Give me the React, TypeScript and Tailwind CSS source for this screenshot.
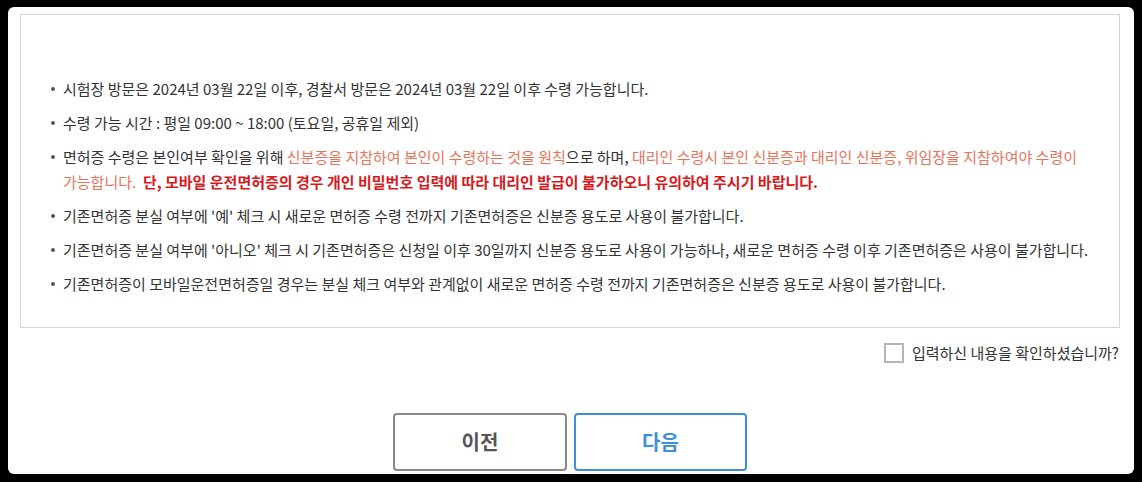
const items: { key: string; body: React.ReactNode }[] = [
  {
    key: "visit",
    body: "시험장 방문은 2024년 03월 22일 이후, 경찰서 방문은 2024년 03월 22일 이후 수령 가능합니다.",
  },
  {
    key: "time",
    body: "수령 가능 시간 : 평일 09:00 ~ 18:00 (토요일, 공휴일 제외)",
  },
  {
    key: "proxy",
    body: (
      <>
        면허증 수령은 본인여부 확인을 위해{" "}
        <span className="text-[#e8735a]">신분증을 지참하여 본인이 수령하는 것을 원칙</span>으로 하며,{" "}
        <span className="text-[#e8735a]">
          대리인 수령시 본인 신분증과 대리인 신분증, 위임장을 지참하여야 수령이 가능합니다.
        </span>
        &nbsp;{" "}
        <span className="font-bold text-[#d7191c]">
          단, 모바일 운전면허증의 경우 개인 비밀번호 입력에 따라 대리인 발급이 불가하오니 유의하여 주시기 바랍니다.
        </span>
      </>
    ),
  },
  {
    key: "lost-yes",
    body: "기존면허증 분실 여부에 '예' 체크 시 새로운 면허증 수령 전까지 기존면허증은 신분증 용도로 사용이 불가합니다.",
  },
  {
    key: "lost-no",
    body: "기존면허증 분실 여부에 '아니오' 체크 시 기존면허증은 신청일 이후 30일까지 신분증 용도로 사용이 가능하나, 새로운 면허증 수령 이후 기존면허증은 사용이 불가합니다.",
  },
  {
    key: "mobile",
    body: "기존면허증이 모바일운전면허증일 경우는 분실 체크 여부와 관계없이 새로운 면허증 수령 전까지 기존면허증은 신분증 용도로 사용이 불가합니다.",
  },
];

export default function App() {
  return (
    <div
      className="w-[1142px] h-[482px] bg-black pt-[7px] pl-[8px] pr-[8px] pb-[8px]"
      style={{ fontFamily: '"Noto Sans CJK KR", "Noto Sans", sans-serif' }}
    >
      <div className="h-full bg-white rounded-[6px] pt-[7px] pl-[12px] pr-[14px] overflow-hidden">
        {/* Notice box */}
        <div className="h-[314px] border border-[#d4d4d4] pt-[61px] pl-[30px] pr-[26px]">
          <ul className="space-y-[9px] text-[15px] leading-[25px] text-[#333333]">
            {items.map((item) => (
              <li key={item.key} className="flex">
                <span className="w-[4px] h-[4px] rounded-full bg-[#555555] mt-[11px] mr-[8px] shrink-0" />
                <p>{item.body}</p>
              </li>
            ))}
          </ul>
        </div>

        {/* Confirm checkbox */}
        <label className="flex items-center justify-end gap-[8px] mt-[14px] pr-[1px]">
          <span className="w-[20px] h-[20px] border-2 border-[#b5b5b5] bg-white" />
          <span className="text-[15px] text-[#333333]">입력하신 내용을 확인하셨습니까?</span>
        </label>

        {/* Buttons */}
        <div className="flex justify-center gap-[7px] mt-[48px]">
          <button className="w-[174px] h-[58px] rounded-[4px] border-2 border-[#8a8a8a] bg-white text-[20px] font-bold text-[#555555]">
            이전
          </button>
          <button className="w-[173px] h-[58px] rounded-[4px] border-2 border-[#3d8fd9] bg-white text-[20px] font-bold text-[#3d8fd9]">
            다음
          </button>
        </div>
      </div>
    </div>
  );
}
